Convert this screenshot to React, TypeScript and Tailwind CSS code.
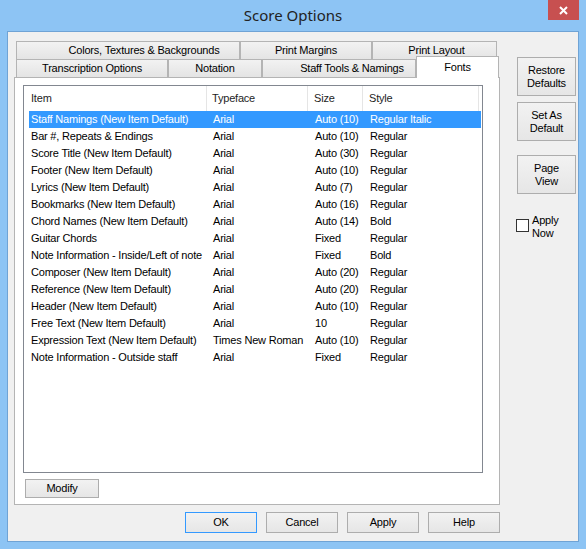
const rows = [
    ["Staff Namings (New Item Default)", "Arial", "Auto (10)", "Regular Italic"],
    ["Bar #, Repeats & Endings", "Arial", "Auto (10)", "Regular"],
    ["Score Title (New Item Default)", "Arial", "Auto (30)", "Regular"],
    ["Footer (New Item Default)", "Arial", "Auto (10)", "Regular"],
    ["Lyrics (New Item Default)", "Arial", "Auto (7)", "Regular"],
    ["Bookmarks (New Item Default)", "Arial", "Auto (16)", "Regular"],
    ["Chord Names (New Item Default)", "Arial", "Auto (14)", "Bold"],
    ["Guitar Chords", "Arial", "Fixed", "Regular"],
    ["Note Information - Inside/Left of note", "Arial", "Fixed", "Bold"],
    ["Composer (New Item Default)", "Arial", "Auto (20)", "Regular"],
    ["Reference (New Item Default)", "Arial", "Auto (20)", "Regular"],
    ["Header (New Item Default)", "Arial", "Auto (10)", "Regular"],
    ["Free Text (New Item Default)", "Arial", "10", "Regular"],
    ["Expression Text (New Item Default)", "Times New Roman", "Auto (10)", "Regular"],
    ["Note Information - Outside staff", "Arial", "Fixed", "Regular"],
];

const btn =
    "flex items-center justify-center border border-[#adadad] bg-gradient-to-b from-[#f2f2f2] to-[#e6e6e6] text-black leading-[13px] text-center";

function Tab({ label, w, pl }: { label: string; w: string; pl?: string }) {
    return (
        <div
            className={`${w} h-[18px] flex items-center justify-center border border-b-0 border-[#b4b4b4] bg-gradient-to-b from-[#f2f2f2] to-[#e4e4e4] ${pl || ""}`}
        >
            {label}
        </div>
    );
}

export default function App() {
    return (
        <div className="w-[586px] h-[549px] bg-[#8dc4f4] flex flex-col font-['Liberation_Sans',Arial,sans-serif] text-[11px] tracking-[-0.2px] text-black">
            <div className="h-[31px] relative flex items-center justify-center">
                <span className="font-['Noto_Sans',sans-serif] text-[15px] tracking-normal text-[#222] pb-[1px]">
                    Score Options
                </span>
                <div className="absolute right-[7px] top-0 w-[31px] h-[20px] bg-[#c75050] flex items-center justify-center">
                    <svg width="9" height="9" viewBox="0 0 9 9">
                        <path d="M1 1L8 8M8 1L1 8" stroke="white" strokeWidth="2" />
                    </svg>
                </div>
            </div>

            <div className="flex-1 mx-[7px] mb-[7px] border border-[#6fa3d5] bg-[#f0f0f0] flex flex-col">
                <div className="flex pt-[9px] pl-[6px]">
                    {/* tab control */}
                    <div className="w-[486px] flex flex-col">
                        <div className="flex pl-[2px]">
                            <Tab label="Colors, Textures & Backgrounds" w="w-[224px]" pl="pl-[32px]" />
                            <Tab label="Print Margins" w="w-[132px]" />
                            <Tab label="Print Layout" w="w-[125px]" pl="pl-[4px]" />
                        </div>
                        <div className="flex pl-[2px] items-end">
                            <Tab label="Transcription Options" w="w-[152px]" />
                            <Tab label="Notation" w="w-[94px]" />
                            <Tab label="Staff Tools & Namings" w="w-[154px]" pl="pl-[26px]" />
                            <div className="relative z-10 -mt-[3px] -mb-[1px] w-[83px] h-[22px] flex justify-center pt-[2px] border border-b-0 border-[#b4b4b4] bg-white">
                                Fonts
                            </div>
                        </div>
                        <div className="h-[428px] border border-[#b4b4b4] bg-white flex flex-col pt-[7px] pl-[8px]">
                            <div className="w-[460px] h-[388px] border border-[#828790] bg-white flex flex-col">
                                <div className="h-[25px] flex items-center text-[#1e1e1e]">
                                    <div className="w-[183px] h-full flex items-center pl-[7px] border-r border-[#e5e5e5]">Item</div>
                                    <div className="w-[101px] h-full flex items-center pl-[5px] border-r border-[#e5e5e5]">Typeface</div>
                                    <div className="w-[55px] h-full flex items-center pl-[6px] border-r border-[#e5e5e5]">Size</div>
                                    <div className="w-[116px] h-full flex items-center pl-[6px] border-r border-[#e5e5e5]">Style</div>
                                </div>
                                <div className="flex flex-col pl-[5px]">
                                    {rows.map((r, i) => (
                                        <div
                                            key={i}
                                            className={`h-[17px] w-[452px] flex items-center whitespace-nowrap ${i === 0 ? "bg-[#3399ff] text-white" : ""}`}
                                        >
                                            <div className="w-[178px] pl-[2px] overflow-hidden">{r[0]}</div>
                                            <div className="w-[101px] pl-[6px]">{r[1]}</div>
                                            <div className="w-[55px] pl-[7px]">{r[2]}</div>
                                            <div className="flex-1 pl-[7px]">{r[3]}</div>
                                        </div>
                                    ))}
                                </div>
                            </div>
                            <div className="mt-[6px] ml-[2px]">
                                <div className={`${btn} w-[74px] h-[19px]`}>Modify</div>
                            </div>
                        </div>
                    </div>

                    {/* right side buttons */}
                    <div className="ml-[17px] pt-[16px] flex flex-col">
                        <div className={`${btn} w-[59px] h-[39px]`}>
                            Restore
                            <br />
                            Defaults
                        </div>
                        <div className={`${btn} w-[59px] h-[39px] mt-[6px]`}>
                            Set As
                            <br />
                            Default
                        </div>
                        <div className={`${btn} w-[59px] h-[39px] mt-[14px]`}>
                            Page
                            <br />
                            View
                        </div>
                        <div className="flex mt-[20px] -ml-[1px]">
                            <div className="w-[13px] h-[13px] border border-[#333] bg-white mt-[5px]" />
                            <div className="ml-[3px] leading-[13px]">
                                Apply
                                <br />
                                Now
                            </div>
                        </div>
                    </div>
                </div>

                <div className="flex gap-[9px] pl-[177px] mt-[7px]">
                    <div className={`${btn} w-[72px] h-[21px] !border-[#3399ff]`}>OK</div>
                    <div className={`${btn} w-[72px] h-[21px]`}>Cancel</div>
                    <div className={`${btn} w-[72px] h-[21px]`}>Apply</div>
                    <div className={`${btn} w-[72px] h-[21px]`}>Help</div>
                </div>
            </div>
        </div>
    );
}
